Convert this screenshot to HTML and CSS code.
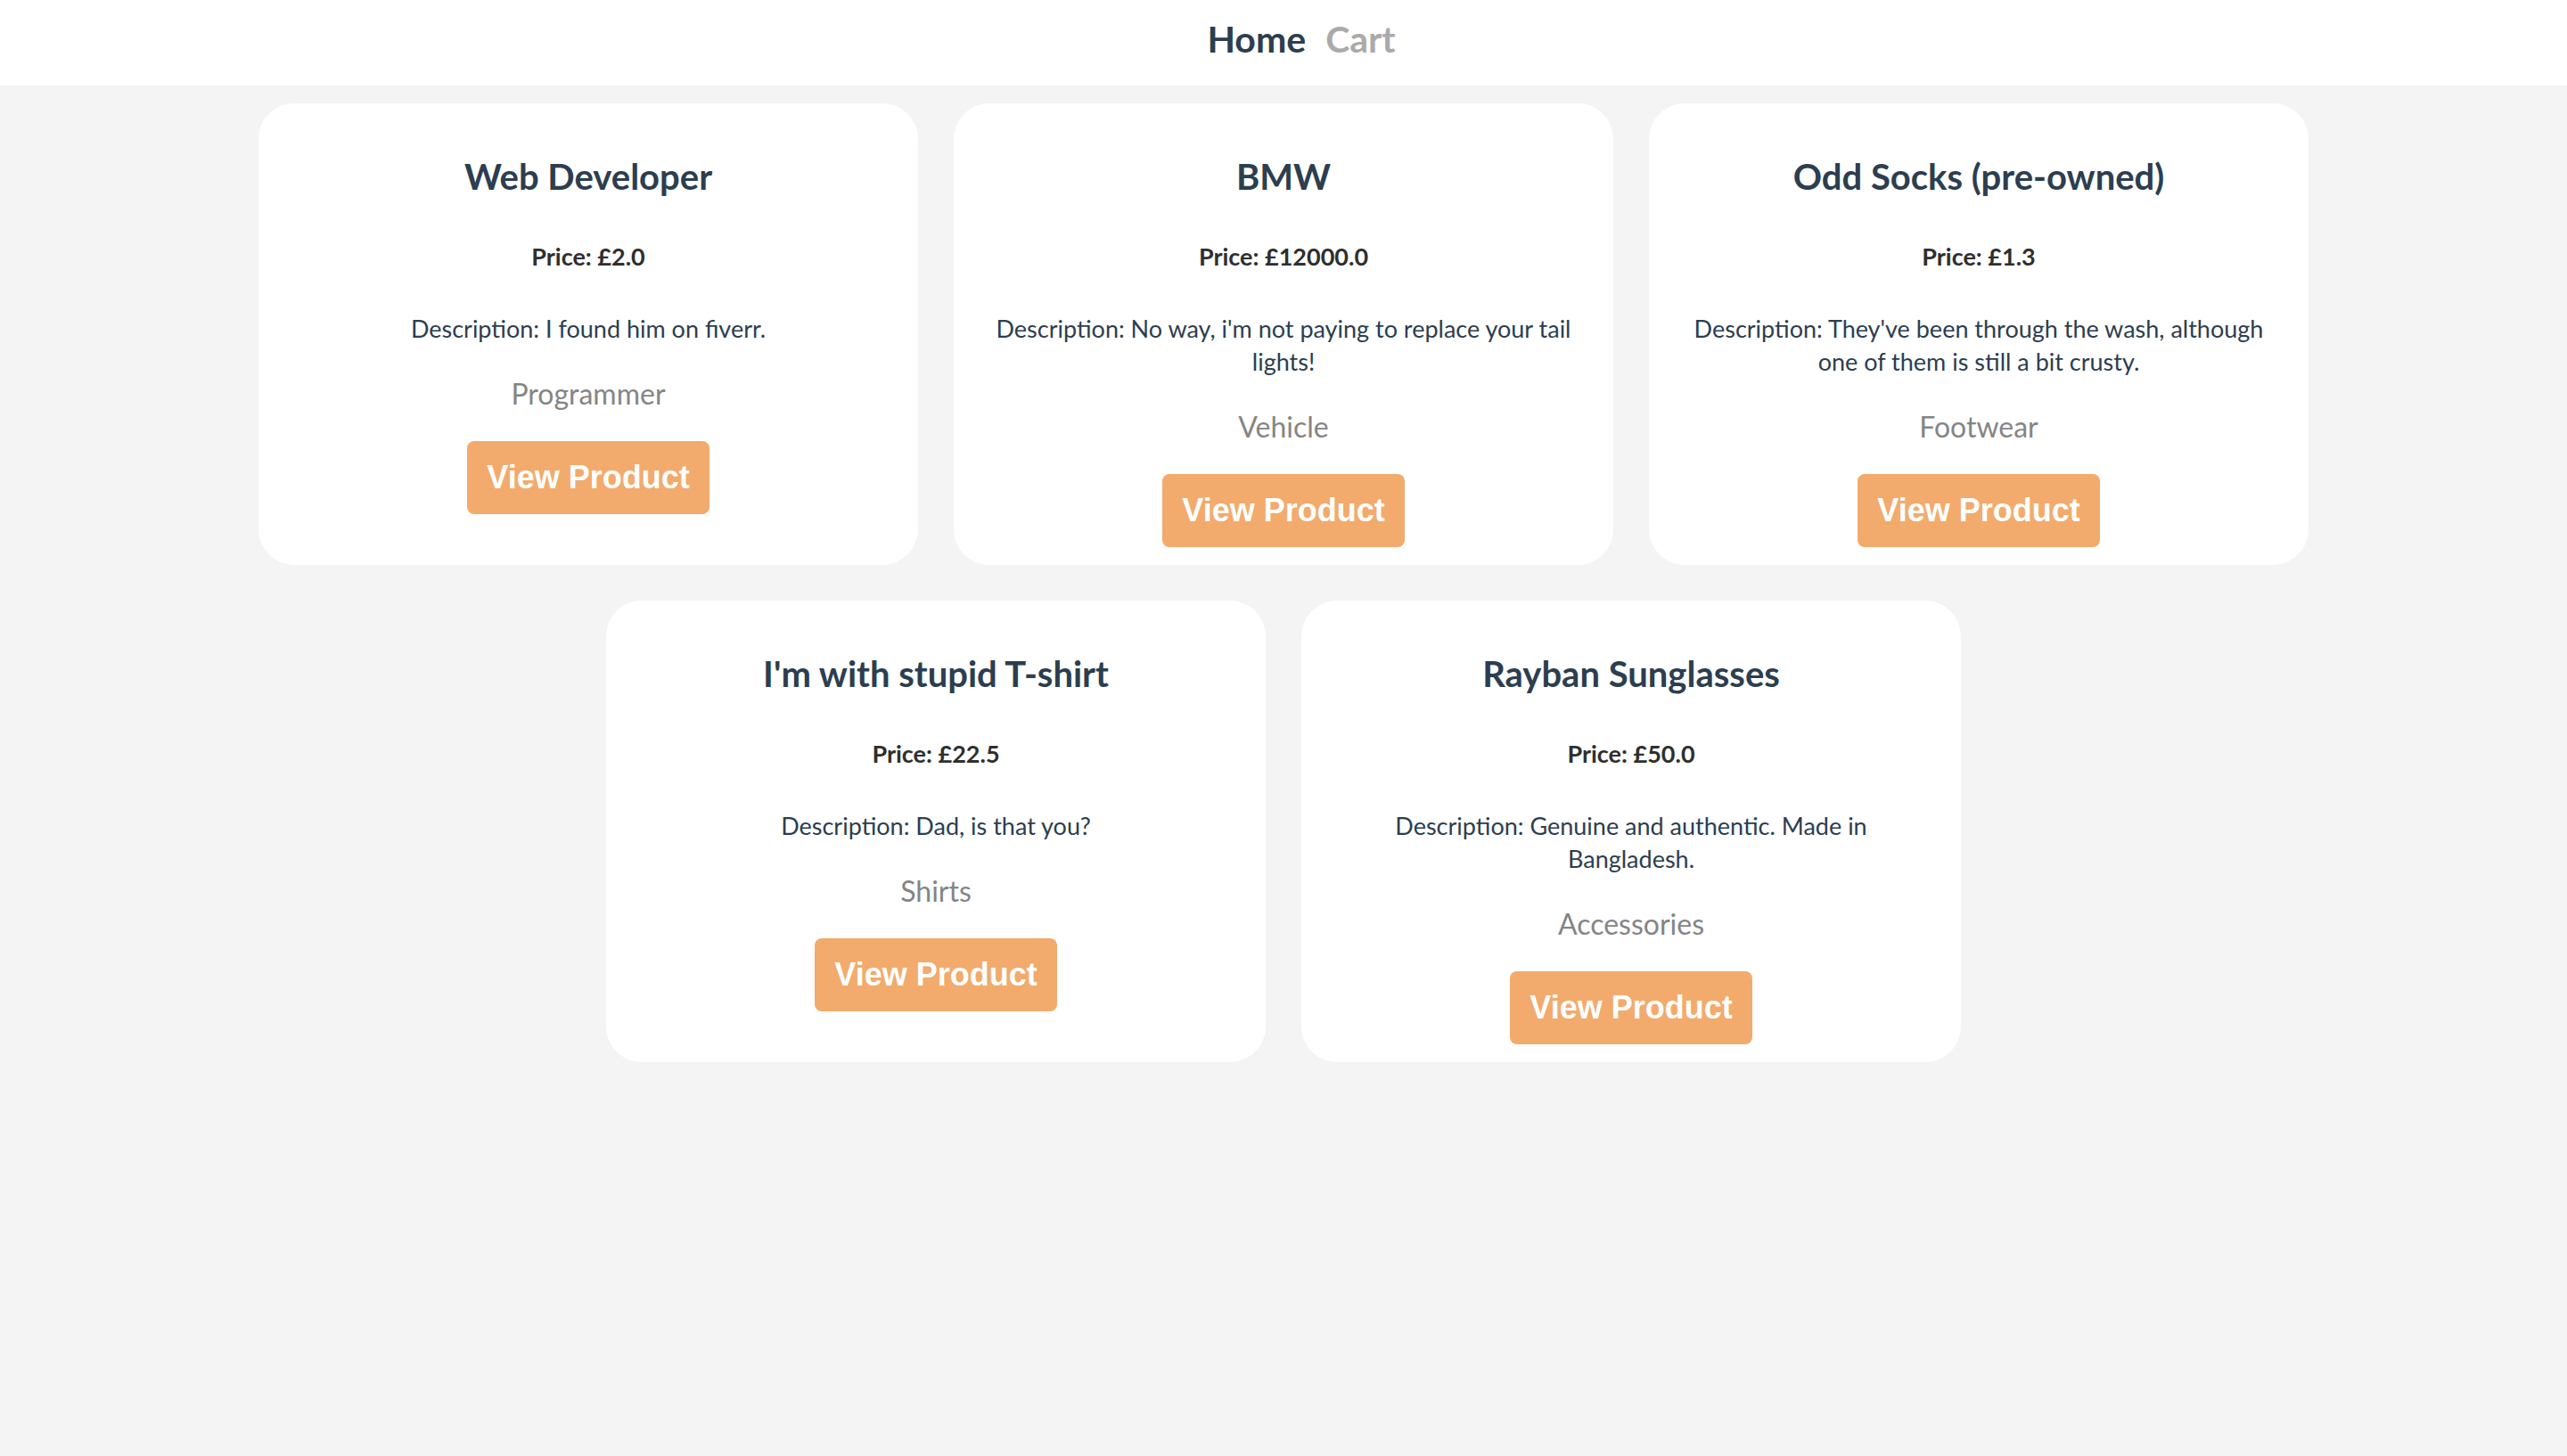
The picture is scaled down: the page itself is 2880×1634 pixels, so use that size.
FILE: index.html
```html
<!DOCTYPE html>
<html lang="en">
<head>
<meta charset="utf-8">
<title>Shop</title>
<link rel="stylesheet" href="styles.css">
</head>
<body>
<div class="app">
  <nav class="nav">
    <a class="nav-link active" href="#">Home</a>
    <a class="nav-link" href="#">Cart</a>
  </nav>
  <main class="products">
    <div class="card">
      <h2 class="title">Web Developer</h2>
      <p class="price">Price: £2.0</p>
      <p class="desc">Description: I found him on fiverr.</p>
      <p class="category">Programmer</p>
      <button class="btn">View Product</button>
    </div>
    <div class="card">
      <h2 class="title">BMW</h2>
      <p class="price">Price: £12000.0</p>
      <p class="desc">Description: No way, i'm not paying to replace your tail lights!</p>
      <p class="category">Vehicle</p>
      <button class="btn">View Product</button>
    </div>
    <div class="card">
      <h2 class="title">Odd Socks (pre-owned)</h2>
      <p class="price">Price: £1.3</p>
      <p class="desc">Description: They've been through the wash, although one of them is still a bit crusty.</p>
      <p class="category">Footwear</p>
      <button class="btn">View Product</button>
    </div>
    <div class="card">
      <h2 class="title">I'm with stupid T-shirt</h2>
      <p class="price">Price: £22.5</p>
      <p class="desc">Description: Dad, is that you?</p>
      <p class="category">Shirts</p>
      <button class="btn">View Product</button>
    </div>
    <div class="card">
      <h2 class="title">Rayban Sunglasses</h2>
      <p class="price">Price: £50.0</p>
      <p class="desc">Description: Genuine and authentic. Made in Bangladesh.</p>
      <p class="category">Accessories</p>
      <button class="btn">View Product</button>
    </div>
  </main>
</div>
</body>
</html>
```
FILE: styles.css
```css
html, body {
  margin: 0;
  padding: 0;
}
body {
  background: #f4f4f4;
  font-family: Lato, "Open Sans", sans-serif;
  color: #2c3e50;
  min-height: 1634px;
}
.nav {
  height: 96px;
  background: #ffffff;
  display: flex;
  justify-content: center;
  align-items: flex-start;
  gap: 22px;
  padding-top: 19px;
  padding-left: 40px;
  box-sizing: border-box;
}
.nav-link {
  font-size: 41px;
  font-weight: 700;
  line-height: 50px;
  text-decoration: none;
  color: #aaaaaa;
}
.nav-link.active {
  color: #2c3e50;
}
.products {
  display: flex;
  flex-wrap: wrap;
  justify-content: center;
  padding: 20px 270px 0;
  gap: 40px 40px;
}
.card {
  width: 740px;
  box-sizing: border-box;
  background: #ffffff;
  border-radius: 40px;
  padding: 58px 20px 20px;
  display: flex;
  flex-direction: column;
  align-items: center;
  text-align: center;
}
.title {
  margin: 0;
  font-size: 40px;
  font-weight: 700;
  line-height: 48px;
  color: #2c3e50;
}
.price {
  margin: 51px 0 0;
  font-size: 27px;
  font-weight: 700;
  line-height: 30px;
  color: #2f2f2f;
}
.desc {
  margin: 47px 0 0;
  font-size: 27px;
  line-height: 37px;
  color: #2c3e50;
  max-width: 670px;
}
.category {
  margin: 36px 0 0;
  font-size: 32px;
  line-height: 37px;
  color: #858585;
}
.btn {
  margin-top: 35px;
  height: 82px;
  width: 272px;
  border: none;
  border-radius: 8px;
  background: #f2ab6c;
  color: #ffffff;
  font-family: "Liberation Sans", Arial, sans-serif;
  font-weight: 700;
  font-size: 36px;
  padding: 0;
}
```
